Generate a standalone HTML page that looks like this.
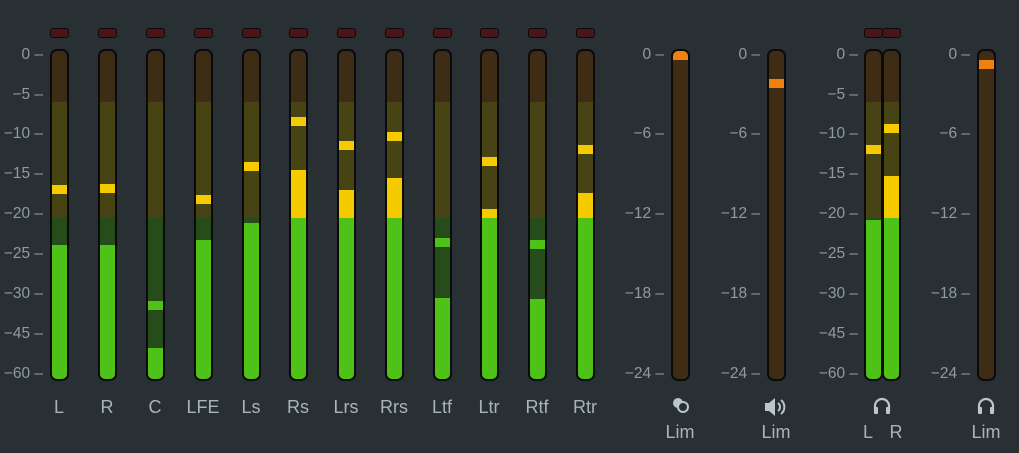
<!DOCTYPE html><html><head><style>
body{margin:0;width:1019px;height:453px;background:#293034;overflow:hidden;position:relative;font-family:"Liberation Sans","DejaVu Sans",sans-serif}
.m{position:absolute;top:49px;height:332px;border:2px solid #0b0b0b;border-radius:7px;box-sizing:border-box;overflow:hidden;background:#3e2d14}
.s{position:absolute;left:0;right:0}
.led{position:absolute;top:28px;height:10px;background:#4a1518;border:1.5px solid #0b0b0b;border-radius:3px;box-sizing:border-box}
.t{position:absolute;color:#8f9ba0;font-size:15.5px;text-align:right;width:50px;line-height:15px}
.lb{position:absolute;color:#a9b4b8;font-size:18px;text-align:center;width:50px;top:397px}
</style></head><body>
<div id="r"></div>
<script>
var h='';
function m(x,w,lit,peak,pc,mono){
 var s='<div class="m" style="left:'+x+'px;width:'+w+'px">';
 var b=-49-2;
 function seg(t,bt,c){if(bt>t)s+='<div class="s" style="top:'+(t+b)+'px;height:'+(bt-t)+'px;background:'+c+'"></div>';}
 if(!mono){seg(102,218,'#464314');seg(218,381,'#264c1c');
  if(lit<218){seg(lit,218,'#f5cb00');seg(218,381,'#4fc217');}else seg(lit,381,'#4fc217');
  var pcol=peak<102?'#f08010':peak<218?'#f5cb00':'#4fc217';seg(peak,peak+9,pcol);}
 else{seg(peak,peak+9,'#f08010');}
 s+='</div>';h+=s;
}
var ch=[['L',245,185],['R',245,184],['C',348,301],['LFE',240,195],['Ls',223,162],['Rs',170,117],['Lrs',190,141],['Rrs',178,132],['Ltf',298,238],['Ltr',209,157],['Rtf',299,240],['Rtr',193,145]];
var cx=[59,107,155,203,251,298,346,394,442,489,537,585];
ch.forEach(function(c,i){m(cx[i]-9,19,c[1],c[2]);h+='<div class="led" style="left:'+(cx[i]-9)+'px;width:19px"></div><div class="lb" style="left:'+(cx[i]-25)+'px">'+c[0]+'</div>';});
var tk=[['0',55],['-5',95],['-10',134],['-15',174],['-20',214],['-25',254],['-30',294],['-45',334],['-60',374]];
var tk2=[['0',55],['-6',134],['-12',214],['-18',294],['-24',374]];
function ticks(arr,x){arr.forEach(function(t){h+='<div class="t" style="left:'+(x-50)+'px;top:'+(t[1]-8)+'px">'+t[0].replace('-','−')+' –</div>';});}
ticks(tk,43);ticks(tk2,664);ticks(tk2,760);ticks(tk,858);ticks(tk2,970);
m(671,19,0,51,0,1);m(767,19,0,79,0,1);m(977,19,0,60,0,1);
m(864,19,220,145);m(882,19,176,124);
h+='<div class="led" style="left:864px;width:19px"></div><div class="led" style="left:882px;width:19px"></div>';
h+='<div class="lb" style="left:655px;top:422px">Lim</div><div class="lb" style="left:751px;top:422px">Lim</div><div class="lb" style="left:961px;top:422px">Lim</div>';
h+='<div class="lb" style="left:843px;top:422px">L</div><div class="lb" style="left:871px;top:422px">R</div>';
var ic='#bcc6ca';
h+='<svg style="position:absolute;left:670px;top:395px" width="24" height="22"><circle cx="8" cy="8" r="5" fill="'+ic+'"/><circle cx="13" cy="12" r="5" fill="#293034" stroke="'+ic+'" stroke-width="2"/></svg>';
h+='<svg style="position:absolute;left:763px;top:395px" width="26" height="24"><path d="M2 8h4l6-5v18l-6-5H2z" fill="'+ic+'"/><path d="M15 8a5 5 0 0 1 0 8M18 5a9 9 0 0 1 0 14" stroke="'+ic+'" stroke-width="2" fill="none"/></svg>';
function hp(x){h+='<svg style="position:absolute;left:'+x+'px;top:396px" width="20" height="20"><path d="M3 15V10a7 7 0 0 1 14 0v5" stroke="'+ic+'" stroke-width="2.2" fill="none"/><rect x="2" y="11" width="4" height="7" rx="1" fill="'+ic+'"/><rect x="14" y="11" width="4" height="7" rx="1" fill="'+ic+'"/></svg>';}
hp(872);hp(976);
document.getElementById('r').innerHTML=h;
</script>
</body></html>
